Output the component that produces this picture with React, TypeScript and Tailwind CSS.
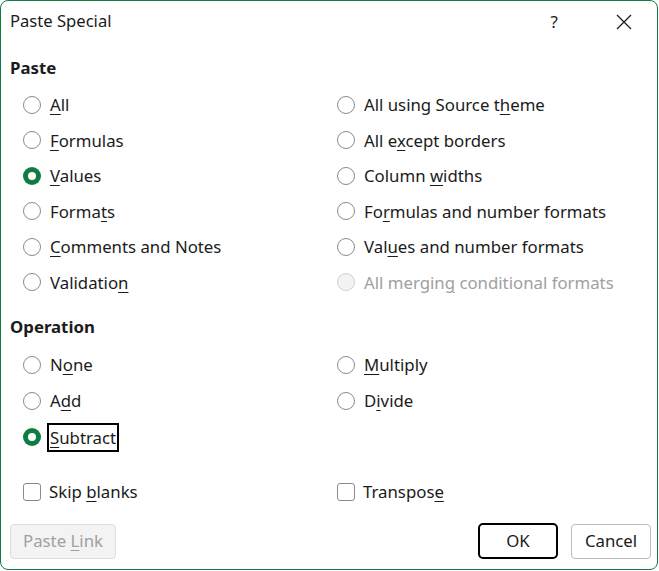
import React from "react";

type Opt = { label: React.ReactNode; checked?: boolean; disabled?: boolean; focus?: boolean };

const K = ({ children }: { children: React.ReactNode }) => (
  <u className="underline decoration-1 underline-offset-[3px]">{children}</u>
);

function Radio({ opt }: { opt: Opt }) {
  return (
    <div className="flex items-center h-full">
      {opt.checked ? (
        <span className="w-[18px] h-[18px] rounded-full bg-[#107c41] flex items-center justify-center shrink-0">
          <span className="w-[8px] h-[8px] rounded-full bg-white" />
        </span>
      ) : opt.disabled ? (
        <span className="w-[18px] h-[18px] rounded-full border border-[#d0d0d0] bg-[#f3f3f3] shrink-0" />
      ) : (
        <span className="w-[18px] h-[18px] rounded-full border border-[#8a8a8a] bg-white shrink-0" />
      )}
      <span
        className={
          (opt.disabled ? "text-[#a0a0a0] " : "text-[#1b1b1b] ") +
          (opt.focus ? "ml-[6px] border-2 border-black px-[1px] h-[29px] leading-[25px]" : "ml-[9px]")
        }
      >
        {opt.label}
      </span>
    </div>
  );
}

const pasteLeft: Opt[] = [
  { label: <><K>A</K>ll</> },
  { label: <><K>F</K>ormulas</> },
  { label: <><K>V</K>alues</>, checked: true },
  { label: <>Forma<K>t</K>s</> },
  { label: <><K>C</K>omments and Notes</> },
  { label: <>Validatio<K>n</K></> },
];

const pasteRight: Opt[] = [
  { label: <>All using Source t<K>h</K>eme</> },
  { label: <>All e<K>x</K>cept borders</> },
  { label: <>Column <K>w</K>idths</> },
  { label: <>Fo<K>r</K>mulas and number formats</> },
  { label: <>Val<K>u</K>es and number formats</> },
  { label: <>All mergin<K>g</K> conditional formats</>, disabled: true },
];

export default function App() {
  return (
    <div
      className="w-[658px] h-[570px] bg-white border border-[#107c41] rounded-[8px] flex flex-col text-[16.8px] text-[#1b1b1b]"
      style={{ fontFamily: '"Noto Sans", "Open Sans", sans-serif' }}
    >
      <div className="h-[41px] flex items-center pl-[9px] pr-[20px]">
        <span className="flex-1 text-[16.6px] text-[#1b1b1b]">Paste Special</span>
        <span className="mr-[58px] text-[17px]">?</span>
        <svg width="16" height="16" viewBox="0 0 16 16" className="mr-[5px]">
          <path d="M1 1L15 15M15 1L1 15" stroke="#1b1b1b" strokeWidth="1.3" fill="none" />
        </svg>
      </div>

      <div className="mt-[14px] h-[24px] leading-[24px] pl-[9px] font-bold">Paste</div>
      <div className="mt-[7px] grid grid-cols-[314px_1fr] pl-[22px]">
        <div className="flex flex-col">
          {pasteLeft.map((o, i) => (
            <div key={i} className="h-[35.5px]"><Radio opt={o} /></div>
          ))}
        </div>
        <div className="flex flex-col">
          {pasteRight.map((o, i) => (
            <div key={i} className="h-[35.5px]"><Radio opt={o} /></div>
          ))}
        </div>
      </div>

      <div className="mt-[15px] h-[24px] leading-[24px] pl-[9px] font-bold">Operation</div>
      <div className="mt-[8px] grid grid-cols-[314px_1fr] pl-[22px]">
        <div className="flex flex-col">
          <div className="h-[36px]"><Radio opt={{ label: <>N<K>o</K>ne</> }} /></div>
          <div className="h-[36px]"><Radio opt={{ label: <>A<K>d</K>d</> }} /></div>
          <div className="h-[36px]"><Radio opt={{ label: <><K>S</K>ubtract</>, checked: true, focus: true }} /></div>
        </div>
        <div className="flex flex-col">
          <div className="h-[36px]"><Radio opt={{ label: <><K>M</K>ultiply</> }} /></div>
          <div className="h-[36px]"><Radio opt={{ label: <>D<K>i</K>vide</> }} /></div>
        </div>
      </div>

      <div className="mt-[19px] h-[36px] grid grid-cols-[314px_1fr] pl-[22px]">
        <div className="flex items-center">
          <span className="w-[18px] h-[18px] rounded-[3px] border border-[#8a8a8a]" />
          <span className="ml-[8px]">Skip <K>b</K>lanks</span>
        </div>
        <div className="flex items-center">
          <span className="w-[18px] h-[18px] rounded-[3px] border border-[#8a8a8a]" />
          <span className="ml-[8px]">Transpos<K>e</K></span>
        </div>
      </div>

      <div className="mt-[13px] flex items-center pl-[9px] pr-[6px]">
        <button className="w-[106px] h-[35px] rounded-[4px] border border-[#dcdcdc] bg-[#f3f3f3] text-[#a0a0a0]">
          Paste <K>L</K>ink
        </button>
        <div className="flex-1" />
        <button className="w-[80px] h-[36px] rounded-[5px] border-2 border-black bg-white text-[#1b1b1b]">OK</button>
        <button className="ml-[13px] w-[80px] h-[35px] rounded-[4px] border border-[#bdbdbd] bg-white text-[#1b1b1b]">
          Cancel
        </button>
      </div>
    </div>
  );
}
